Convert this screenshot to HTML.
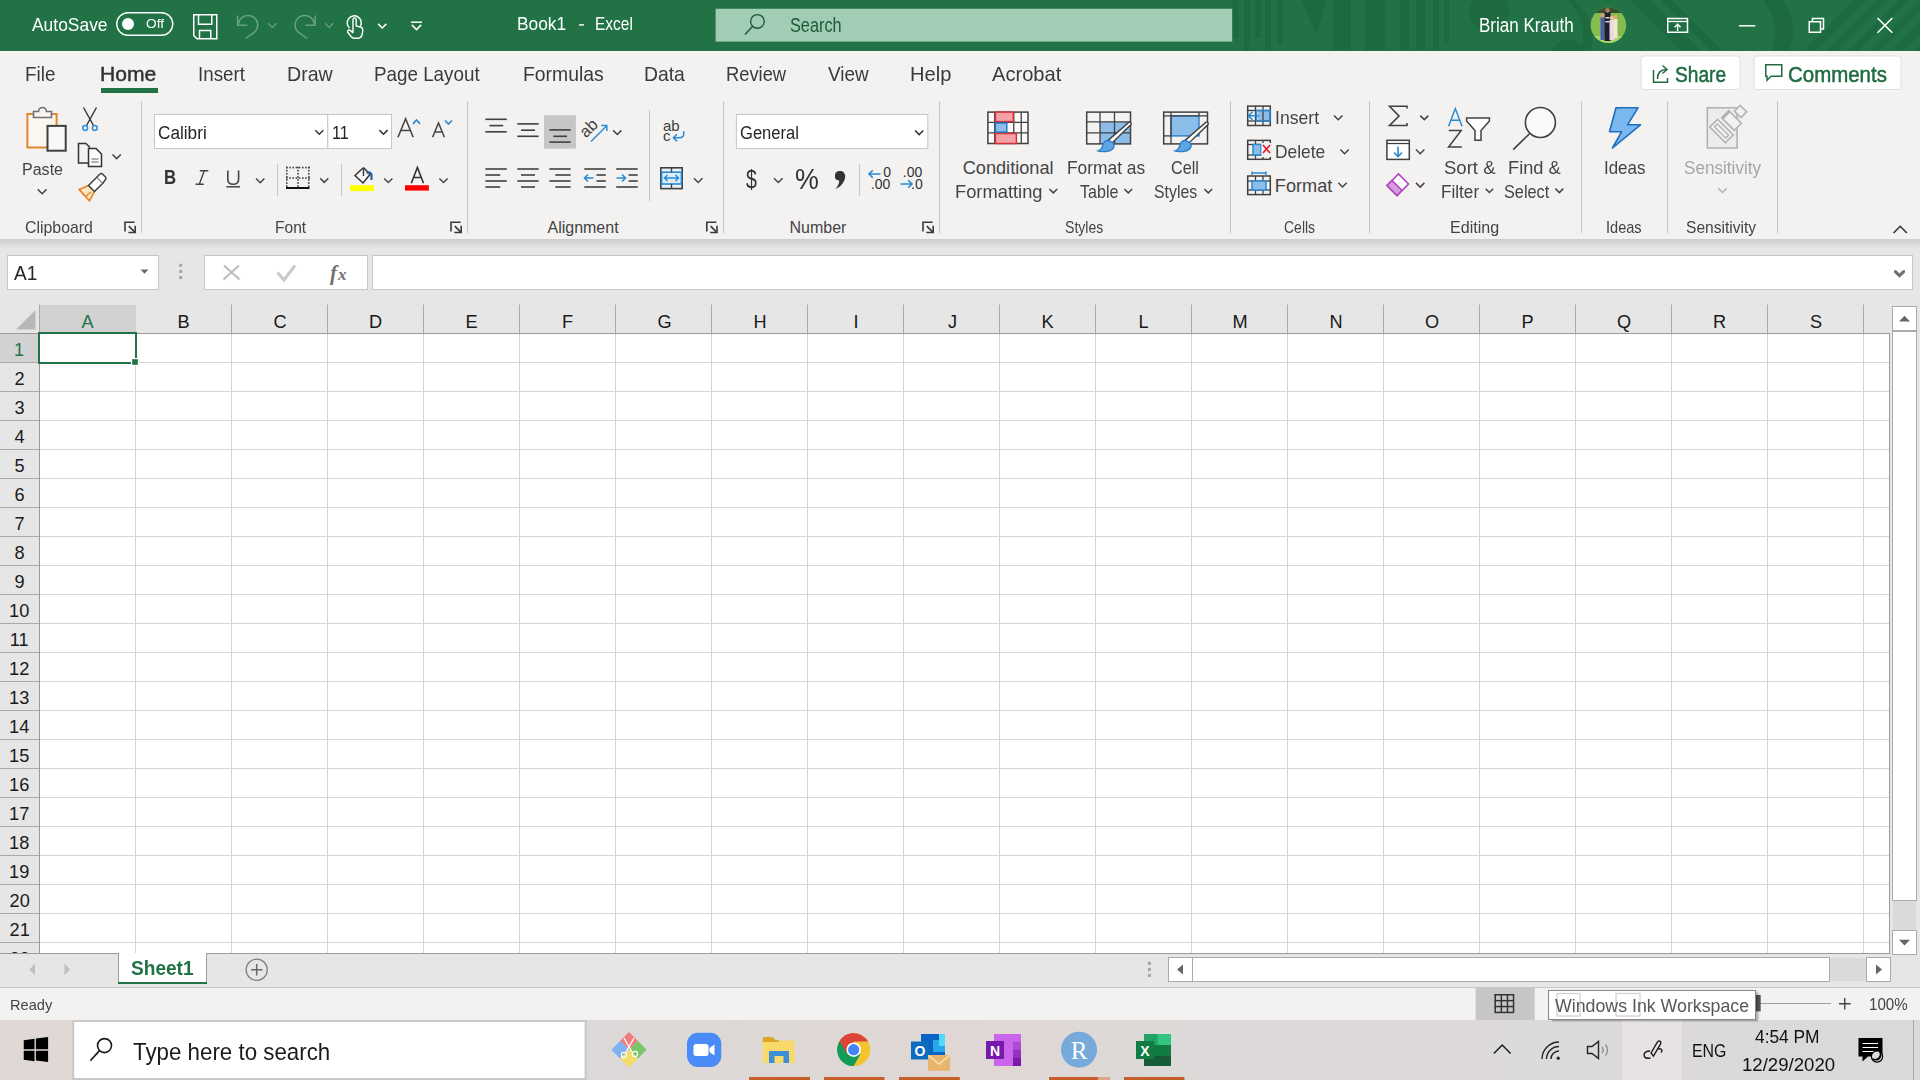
<!DOCTYPE html>
<html><head><meta charset="utf-8"><style>
html,body{margin:0;padding:0;}
body{width:1920px;height:1080px;overflow:hidden;position:relative;background:#fff;font-family:"Liberation Sans",sans-serif;}
.r{position:absolute;}
.t{position:absolute;white-space:pre;line-height:normal;transform-origin:0 0;}
svg{position:absolute;left:0;top:0;}
</style></head><body>
<div class="r" style="left:0px;top:0px;width:1920px;height:51px;background:#217346;"></div>
<div class="r" style="left:0px;top:51px;width:1920px;height:188px;background:#f3f2f1;"></div>
<div class="r" style="left:0px;top:239px;width:1920px;height:714px;background:#e6e6e6;"></div>
<div class="r" style="left:0px;top:239px;width:1920px;height:10px;background:linear-gradient(#cdcdcc,#d8d8d8 35%,#e6e6e6);"></div>
<div class="r" style="left:40px;top:334px;width:1850px;height:619px;background:#ffffff;"></div>
<svg width="1920" height="1080" viewBox="0 0 1920 1080">
<line x1="135.5" y1="334" x2="135.5" y2="953" stroke="#d5d5d5" stroke-width="1"/>
<line x1="231.5" y1="334" x2="231.5" y2="953" stroke="#d5d5d5" stroke-width="1"/>
<line x1="327.5" y1="334" x2="327.5" y2="953" stroke="#d5d5d5" stroke-width="1"/>
<line x1="423.5" y1="334" x2="423.5" y2="953" stroke="#d5d5d5" stroke-width="1"/>
<line x1="519.5" y1="334" x2="519.5" y2="953" stroke="#d5d5d5" stroke-width="1"/>
<line x1="615.5" y1="334" x2="615.5" y2="953" stroke="#d5d5d5" stroke-width="1"/>
<line x1="711.5" y1="334" x2="711.5" y2="953" stroke="#d5d5d5" stroke-width="1"/>
<line x1="807.5" y1="334" x2="807.5" y2="953" stroke="#d5d5d5" stroke-width="1"/>
<line x1="903.5" y1="334" x2="903.5" y2="953" stroke="#d5d5d5" stroke-width="1"/>
<line x1="999.5" y1="334" x2="999.5" y2="953" stroke="#d5d5d5" stroke-width="1"/>
<line x1="1095.5" y1="334" x2="1095.5" y2="953" stroke="#d5d5d5" stroke-width="1"/>
<line x1="1191.5" y1="334" x2="1191.5" y2="953" stroke="#d5d5d5" stroke-width="1"/>
<line x1="1287.5" y1="334" x2="1287.5" y2="953" stroke="#d5d5d5" stroke-width="1"/>
<line x1="1383.5" y1="334" x2="1383.5" y2="953" stroke="#d5d5d5" stroke-width="1"/>
<line x1="1479.5" y1="334" x2="1479.5" y2="953" stroke="#d5d5d5" stroke-width="1"/>
<line x1="1575.5" y1="334" x2="1575.5" y2="953" stroke="#d5d5d5" stroke-width="1"/>
<line x1="1671.5" y1="334" x2="1671.5" y2="953" stroke="#d5d5d5" stroke-width="1"/>
<line x1="1767.5" y1="334" x2="1767.5" y2="953" stroke="#d5d5d5" stroke-width="1"/>
<line x1="1863.5" y1="334" x2="1863.5" y2="953" stroke="#d5d5d5" stroke-width="1"/>
<line x1="40" y1="362.5" x2="1889" y2="362.5" stroke="#d5d5d5" stroke-width="1"/>
<line x1="40" y1="391.5" x2="1889" y2="391.5" stroke="#d5d5d5" stroke-width="1"/>
<line x1="40" y1="420.5" x2="1889" y2="420.5" stroke="#d5d5d5" stroke-width="1"/>
<line x1="40" y1="449.5" x2="1889" y2="449.5" stroke="#d5d5d5" stroke-width="1"/>
<line x1="40" y1="478.5" x2="1889" y2="478.5" stroke="#d5d5d5" stroke-width="1"/>
<line x1="40" y1="507.5" x2="1889" y2="507.5" stroke="#d5d5d5" stroke-width="1"/>
<line x1="40" y1="536.5" x2="1889" y2="536.5" stroke="#d5d5d5" stroke-width="1"/>
<line x1="40" y1="565.5" x2="1889" y2="565.5" stroke="#d5d5d5" stroke-width="1"/>
<line x1="40" y1="594.5" x2="1889" y2="594.5" stroke="#d5d5d5" stroke-width="1"/>
<line x1="40" y1="623.5" x2="1889" y2="623.5" stroke="#d5d5d5" stroke-width="1"/>
<line x1="40" y1="652.5" x2="1889" y2="652.5" stroke="#d5d5d5" stroke-width="1"/>
<line x1="40" y1="681.5" x2="1889" y2="681.5" stroke="#d5d5d5" stroke-width="1"/>
<line x1="40" y1="710.5" x2="1889" y2="710.5" stroke="#d5d5d5" stroke-width="1"/>
<line x1="40" y1="739.5" x2="1889" y2="739.5" stroke="#d5d5d5" stroke-width="1"/>
<line x1="40" y1="768.5" x2="1889" y2="768.5" stroke="#d5d5d5" stroke-width="1"/>
<line x1="40" y1="797.5" x2="1889" y2="797.5" stroke="#d5d5d5" stroke-width="1"/>
<line x1="40" y1="826.5" x2="1889" y2="826.5" stroke="#d5d5d5" stroke-width="1"/>
<line x1="40" y1="855.5" x2="1889" y2="855.5" stroke="#d5d5d5" stroke-width="1"/>
<line x1="40" y1="884.5" x2="1889" y2="884.5" stroke="#d5d5d5" stroke-width="1"/>
<line x1="40" y1="913.5" x2="1889" y2="913.5" stroke="#d5d5d5" stroke-width="1"/>
<line x1="40" y1="942.5" x2="1889" y2="942.5" stroke="#d5d5d5" stroke-width="1"/>
<defs><clipPath id="tbc"><rect x="0" y="0" width="1920" height="51"/></clipPath></defs><g clip-path="url(#tbc)">
<rect x="1232.00" y="0.00" width="6.70" height="38.00" fill="#1d6a40" stroke="none" stroke-width="1" />
<rect x="1244.00" y="0.00" width="5.60" height="50.00" fill="#1d6a40" stroke="none" stroke-width="1" />
<rect x="1255.00" y="0.00" width="5.50" height="38.00" fill="#1d6a40" stroke="none" stroke-width="1" />
<rect x="1265.00" y="0.00" width="5.60" height="50.00" fill="#1d6a40" stroke="none" stroke-width="1" />
<rect x="1277.00" y="0.00" width="5.40" height="45.00" fill="#1d6a40" stroke="none" stroke-width="1" />
<rect x="1333.50" y="0.00" width="17.30" height="50.00" fill="#1d6a40" stroke="none" stroke-width="1" />
<rect x="1365.40" y="0.00" width="20.00" height="50.00" fill="#1d6a40" stroke="none" stroke-width="1" />
<rect x="1400.00" y="0.00" width="9.00" height="50.00" fill="#1d6a40" stroke="none" stroke-width="1" />
<rect x="1416.00" y="0.00" width="9.00" height="50.00" fill="#1d6a40" stroke="none" stroke-width="1" />
<rect x="1433.00" y="0.00" width="6.00" height="50.00" fill="#1d6a40" stroke="none" stroke-width="1" />
<rect x="1444.00" y="0.00" width="5.00" height="42.00" fill="#1d6a40" stroke="none" stroke-width="1" />
<path d="M1302,0 L1327,0 L1316,35 Z" fill="#1d6a40" stroke="none" stroke-width="1" />
<circle cx="1489" cy="11" r="20" fill="#1d6a40"/>
<circle cx="1568" cy="58" r="18" fill="#1d6a40"/>
<path d="M1575,0 Q1600,25 1590,50 L1580,50 Q1590,25 1568,0 Z" fill="#1d6a40" stroke="none" stroke-width="1" />
<path d="M1630,0 L1650,0 L1700,50 L1680,50 Z" fill="#1d6a40" stroke="none" stroke-width="1" />
<path d="M1660,0 L1672,0 L1722,50 L1710,50 Z" fill="#1d6a40" stroke="none" stroke-width="1" />
<path d="M1763,0 L1783,0 Q1800,25 1789,50 L1772,50 Q1782,25 1763,0 Z" fill="#1d6a40" stroke="none" stroke-width="1" />
<path d="M1805,50 L1815,50 L1865,0 L1855,0 Z" fill="#1d6a40" stroke="none" stroke-width="1" />
<path d="M1827,50 L1837,50 L1887,0 L1877,0 Z" fill="#1d6a40" stroke="none" stroke-width="1" />
<path d="M1849,50 L1859,50 L1909,0 L1899,0 Z" fill="#1d6a40" stroke="none" stroke-width="1" />
<path d="M1871,50 L1881,50 L1931,0 L1921,0 Z" fill="#1d6a40" stroke="none" stroke-width="1" />
<path d="M1893,50 L1903,50 L1953,0 L1943,0 Z" fill="#1d6a40" stroke="none" stroke-width="1" />
<path d="M1915,50 L1925,50 L1975,0 L1965,0 Z" fill="#1d6a40" stroke="none" stroke-width="1" />
</g>
<line x1="579" y1="24.9" x2="584" y2="24.9" stroke="#fff" stroke-width="1.4"/>
<rect x="116.75" y="12.75" width="56" height="22.5" rx="11.25" fill="none" stroke="#fff" stroke-width="1.4"/>
<circle cx="128" cy="24" r="6" fill="#fff"/>
<path d="M193.75,14.75 H216.75 V38.75 H197 L193.75,35.5 Z" fill="none" stroke="#ffffff" stroke-width="1.5" />
<path d="M198.5,14.75 V24.25 H211.75 V14.75" fill="none" stroke="#ffffff" stroke-width="1.5" />
<path d="M199.5,38.75 V30.5 H210.75 V38.75" fill="none" stroke="#ffffff" stroke-width="1.5" />
<path d="M238.6,23.5 A9.6,9.6 0 1 1 254.5,32.2 L245.5,38.5" fill="none" stroke="rgba(255,255,255,0.33)" stroke-width="1.5" />
<path d="M237.6,15.5 V25.2 H247.4" fill="none" stroke="rgba(255,255,255,0.33)" stroke-width="1.5" />
<path d="M268.20,23.25 L272.30,27.35 L276.40,23.25" fill="none" stroke="rgba(255,255,255,0.33)" stroke-width="1.3"/>
<path d="M314.2,23.5 A9.6,9.6 0 1 0 298.3,32.2 L307.3,38.5" fill="none" stroke="rgba(255,255,255,0.33)" stroke-width="1.5" />
<path d="M315.2,15.5 V25.2 H305.4" fill="none" stroke="rgba(255,255,255,0.33)" stroke-width="1.5" />
<path d="M325.00,23.22 L329.15,27.38 L333.30,23.22" fill="none" stroke="rgba(255,255,255,0.33)" stroke-width="1.3"/>
<path d="M349.5,28 A7,7 0 1 1 360.5,26" fill="none" stroke="#ffffff" stroke-width="1.5" />
<path d="M353,33 V19.5 A1.6,1.6 0 0 1 356.2,19.5 V26 L360.5,27 Q363,27.8 362.8,30.5 L362,35 Q361,38.3 357.5,38.3 H354.5 Q352.5,38.3 351,36.5 L348,32.5 Q347,31 348.5,30.2 Q349.8,29.7 351,31 L353,33" fill="none" stroke="#ffffff" stroke-width="1.4" />
<path d="M378.10,23.85 L382.20,27.95 L386.30,23.85" fill="none" stroke="#ffffff" stroke-width="1.5"/>
<line x1="411" y1="22.2" x2="422" y2="22.2" stroke="#ffffff" stroke-width="1.5"/>
<path d="M411.80,24.90 L416.50,29.60 L421.20,24.90" fill="none" stroke="#ffffff" stroke-width="1.5"/>
<rect x="715.60" y="8.75" width="516.60" height="32.85" fill="#a0cdb3" stroke="none" stroke-width="1" />
<circle cx="757.4" cy="21.4" r="6.8" fill="none" stroke="#1e5b3a" stroke-width="1.4"/>
<path d="M752.5,26.4 L745,34.6" fill="none" stroke="#1e5b3a" stroke-width="1.5" />
<defs><radialGradient id="av" cx="50%" cy="60%" r="55%"><stop offset="0" stop-color="#8fbf5a"/><stop offset="1" stop-color="#5f8f3a"/></radialGradient><clipPath id="avc"><circle cx="1608.4" cy="25.2" r="17.8"/></clipPath></defs>
<circle cx="1608.4" cy="25.2" r="17.8" fill="#86bb4e"/>
<g clip-path="url(#avc)"><rect x="1588.00" y="5.00" width="42.00" height="8.00" fill="#34502c" stroke="none" stroke-width="1" /><rect x="1588.00" y="36.00" width="42.00" height="8.00" fill="#a9d46a" stroke="none" stroke-width="1" /><rect x="1600.50" y="17.00" width="4.00" height="23.00" fill="#4b5fb0" stroke="none" stroke-width="1" /><rect x="1604.50" y="12.00" width="6.00" height="29.00" fill="#1d1d2b" stroke="none" stroke-width="1" /><rect x="1605.50" y="17.00" width="4.00" height="1.50" fill="#ddd" stroke="none" stroke-width="1" /><rect x="1605.50" y="21.00" width="4.00" height="1.50" fill="#ddd" stroke="none" stroke-width="1" /><rect x="1609.50" y="20.00" width="5.00" height="20.00" fill="#ecd6e6" stroke="none" stroke-width="1" /><rect x="1613.50" y="19.00" width="4.00" height="19.00" fill="#f2e8d0" stroke="none" stroke-width="1" /><circle cx="1602.5" cy="15.5" r="2.2" fill="#c9a27a"/><circle cx="1607.5" cy="10.5" r="2.4" fill="#a57a5a"/><circle cx="1612" cy="18" r="2.1" fill="#e8c8a0"/><circle cx="1615.5" cy="17" r="2" fill="#d8b070"/></g>
<rect x="1667.75" y="18.50" width="19.75" height="13.75" fill="none" stroke="#ffffff" stroke-width="1.5" />
<line x1="1668" y1="21.5" x2="1687.5" y2="21.5" stroke="#ffffff" stroke-width="1.3"/>
<path d="M1677.6,31 V24.5 M1674.6,27.3 L1677.6,24.3 L1680.6,27.3" fill="none" stroke="#ffffff" stroke-width="1.4" />
<line x1="1739" y1="25.8" x2="1755.3" y2="25.8" stroke="#ffffff" stroke-width="1.5"/>
<rect x="1809.25" y="21.75" width="11.25" height="10.50" fill="none" stroke="#ffffff" stroke-width="1.5" />
<path d="M1812.5,21.5 V18.5 H1823.5 V29 H1820.5" fill="none" stroke="#ffffff" stroke-width="1.5" />
<path d="M1877.5,18 L1892.3,32.8 M1892.3,18 L1877.5,32.8" fill="none" stroke="#ffffff" stroke-width="1.6" />
<rect x="101.00" y="88.00" width="57.00" height="5.00" fill="#217346" stroke="none" stroke-width="1" />
<rect x="1641" y="56" width="99" height="33.5" rx="3" fill="#fff" stroke="#e1dfdd" stroke-width="1"/>
<rect x="1754" y="56" width="147" height="33.5" rx="3" fill="#fff" stroke="#e1dfdd" stroke-width="1"/>
<path d="M1653.5,70 V82.25 H1667.5 V78" fill="none" stroke="#1e6b41" stroke-width="1.5" />
<path d="M1657.5,79 Q1657.5,69.5 1666.5,69.5" fill="none" stroke="#1e6b41" stroke-width="1.5" />
<path d="M1662.5,65.5 L1667,69.5 L1662.5,73.5" fill="none" stroke="#1e6b41" stroke-width="1.5" />
<path d="M1765.75,64.75 H1781.75 V76.25 H1771 L1767,80.25 V76.25 H1765.75 Z" fill="none" stroke="#1e6b41" stroke-width="1.5" />
<line x1="141.5" y1="101" x2="141.5" y2="233" stroke="#c8c6c4" stroke-width="1"/>
<line x1="467.5" y1="101" x2="467.5" y2="233" stroke="#c8c6c4" stroke-width="1"/>
<line x1="723.5" y1="101" x2="723.5" y2="233" stroke="#c8c6c4" stroke-width="1"/>
<line x1="939.5" y1="101" x2="939.5" y2="233" stroke="#c8c6c4" stroke-width="1"/>
<line x1="1230.5" y1="101" x2="1230.5" y2="233" stroke="#c8c6c4" stroke-width="1"/>
<line x1="1369.5" y1="101" x2="1369.5" y2="233" stroke="#c8c6c4" stroke-width="1"/>
<line x1="1581.5" y1="101" x2="1581.5" y2="233" stroke="#c8c6c4" stroke-width="1"/>
<line x1="1667.5" y1="101" x2="1667.5" y2="233" stroke="#c8c6c4" stroke-width="1"/>
<line x1="1777.5" y1="101" x2="1777.5" y2="233" stroke="#c8c6c4" stroke-width="1"/>
<line x1="277.5" y1="164" x2="277.5" y2="196" stroke="#c8c6c4" stroke-width="1"/>
<line x1="341.5" y1="164" x2="341.5" y2="196" stroke="#c8c6c4" stroke-width="1"/>
<line x1="649.5" y1="110" x2="649.5" y2="201" stroke="#c8c6c4" stroke-width="1"/>
<line x1="859.5" y1="164" x2="859.5" y2="196" stroke="#c8c6c4" stroke-width="1"/>
<rect x="27.40" y="114.00" width="29.20" height="33.50" fill="#fbf6ee" stroke="#e3872a" stroke-width="2" />
<path d="M33.5,117.5 V111.5 H38.5 Q39,107.5 42.5,107.5 Q46,107.5 46.5,111.5 H51.5 V117.5 Z" fill="#f5f5f5" stroke="#707070" stroke-width="1.6" />
<rect x="47.50" y="125.90" width="18.20" height="24.80" fill="#f8f8f8" stroke="#404040" stroke-width="2" />
<path d="M37.80,189.38 L42.15,193.73 L46.50,189.38" fill="none" stroke="#444" stroke-width="1.5"/>
<path d="M83.5,107.5 L93.5,125.5 M96.5,107.5 L86.5,125.5" fill="none" stroke="#333" stroke-width="1.4" />
<circle cx="85.2" cy="128" r="2.4" fill="#fff" stroke="#2a8ad4" stroke-width="1.5"/>
<circle cx="94.8" cy="128" r="2.4" fill="#fff" stroke="#2a8ad4" stroke-width="1.5"/>
<path d="M88,163 H78.5 V143.5 H86 L90,147.5" fill="none" stroke="#333" stroke-width="1.5" />
<path d="M88.5,148.5 H96 L101.5,154 V166.5 H88.5 Z" fill="#fafafa" stroke="#333" stroke-width="1.5" />
<path d="M91.5,159 H98.5 M91.5,162 H98.5" fill="none" stroke="#666" stroke-width="1.2" />
<path d="M112.50,154.43 L116.65,158.57 L120.80,154.43" fill="none" stroke="#444" stroke-width="1.5"/>
<path d="M79.2,189.5 L88.5,185.5 L94.5,191.5 L89.5,200.8 Z" fill="#fce4c4" stroke="#e3872a" stroke-width="1.6" />
<path d="M84.5,195.5 L79.5,189.8 M86,197 Q88,193 91.5,192" fill="none" stroke="#e3872a" stroke-width="1.3" />
<path d="M88.5,185.5 L97,177 L103,183 L94.5,191.5 Z" fill="#fff" stroke="#404040" stroke-width="1.5" />
<path d="M97,177 L100,174 Q101.5,172.8 102.8,174.2 L105.5,177 Q106.7,178.3 105.5,179.6 L103,183" fill="#fff" stroke="#404040" stroke-width="1.5" />
<path d="M125.0,231.6 V222.3 H134.6" fill="none" stroke="#3a3a3a" stroke-width="1.6" /><path d="M128.8,226.1 L134.6,231.9" fill="none" stroke="#3a3a3a" stroke-width="1.6" /><path d="M135.2,225.7 V232.5 H128.4" fill="none" stroke="#3a3a3a" stroke-width="1.6" />
<rect x="154.50" y="114.50" width="173.30" height="34.00" fill="#fff" stroke="#c6c6c6" stroke-width="1" />
<rect x="327.80" y="114.50" width="63.70" height="34.00" fill="#fff" stroke="#c6c6c6" stroke-width="1" />
<path d="M315.30,130.20 L319.30,134.20 L323.30,130.20" fill="none" stroke="#333" stroke-width="1.5"/>
<path d="M379.40,130.15 L383.50,134.25 L387.60,130.15" fill="none" stroke="#333" stroke-width="1.5"/>
<path d="M398,137.2 L405.6,118.8 L413.2,137.2 M400.8,130.5 H410.4" fill="none" stroke="#444" stroke-width="1.6" />
<path d="M413,123.9 L416.5,120 L420,123.9" fill="none" stroke="#2a8ad4" stroke-width="1.6" />
<path d="M432.6,137.2 L438.5,123 L444.4,137.2 M434.8,132 H442.2" fill="none" stroke="#444" stroke-width="1.5" />
<path d="M445,120.5 L448.5,124 L452,120.5" fill="none" stroke="#2a8ad4" stroke-width="1.6" />
<path d="M199.3,184.2 L204.3,170.7 M199.8,170.7 H208.3 M195.5,184.2 H203.8" fill="none" stroke="#444" stroke-width="1.4" />
<path d="M227.8,170.5 V179 Q227.8,184.3 233.2,184.3 Q238.6,184.3 238.6,179 V170.5" fill="none" stroke="#444" stroke-width="1.6" />
<line x1="226.4" y1="186.8" x2="240" y2="186.8" stroke="#444" stroke-width="1.5"/>
<path d="M256.00,178.55 L260.20,182.75 L264.40,178.55" fill="none" stroke="#444" stroke-width="1.5"/>
<rect x="286.00" y="166.75" width="1.60" height="1.60" fill="#404040" stroke="none" stroke-width="1" />
<rect x="286.00" y="177.25" width="1.60" height="1.60" fill="#404040" stroke="none" stroke-width="1" />
<rect x="289.20" y="166.75" width="1.60" height="1.60" fill="#404040" stroke="none" stroke-width="1" />
<rect x="289.20" y="177.25" width="1.60" height="1.60" fill="#404040" stroke="none" stroke-width="1" />
<rect x="292.40" y="166.75" width="1.60" height="1.60" fill="#404040" stroke="none" stroke-width="1" />
<rect x="292.40" y="177.25" width="1.60" height="1.60" fill="#404040" stroke="none" stroke-width="1" />
<rect x="295.60" y="166.75" width="1.60" height="1.60" fill="#404040" stroke="none" stroke-width="1" />
<rect x="295.60" y="177.25" width="1.60" height="1.60" fill="#404040" stroke="none" stroke-width="1" />
<rect x="298.80" y="166.75" width="1.60" height="1.60" fill="#404040" stroke="none" stroke-width="1" />
<rect x="298.80" y="177.25" width="1.60" height="1.60" fill="#404040" stroke="none" stroke-width="1" />
<rect x="302.00" y="166.75" width="1.60" height="1.60" fill="#404040" stroke="none" stroke-width="1" />
<rect x="302.00" y="177.25" width="1.60" height="1.60" fill="#404040" stroke="none" stroke-width="1" />
<rect x="305.20" y="166.75" width="1.60" height="1.60" fill="#404040" stroke="none" stroke-width="1" />
<rect x="305.20" y="177.25" width="1.60" height="1.60" fill="#404040" stroke="none" stroke-width="1" />
<rect x="308.40" y="166.75" width="1.60" height="1.60" fill="#404040" stroke="none" stroke-width="1" />
<rect x="308.40" y="177.25" width="1.60" height="1.60" fill="#404040" stroke="none" stroke-width="1" />
<rect x="286.00" y="166.75" width="1.60" height="1.60" fill="#404040" stroke="none" stroke-width="1" />
<rect x="297.20" y="166.75" width="1.60" height="1.60" fill="#404040" stroke="none" stroke-width="1" />
<rect x="308.00" y="166.75" width="1.60" height="1.60" fill="#404040" stroke="none" stroke-width="1" />
<rect x="286.00" y="169.85" width="1.60" height="1.60" fill="#404040" stroke="none" stroke-width="1" />
<rect x="297.20" y="169.85" width="1.60" height="1.60" fill="#404040" stroke="none" stroke-width="1" />
<rect x="308.00" y="169.85" width="1.60" height="1.60" fill="#404040" stroke="none" stroke-width="1" />
<rect x="286.00" y="172.95" width="1.60" height="1.60" fill="#404040" stroke="none" stroke-width="1" />
<rect x="297.20" y="172.95" width="1.60" height="1.60" fill="#404040" stroke="none" stroke-width="1" />
<rect x="308.00" y="172.95" width="1.60" height="1.60" fill="#404040" stroke="none" stroke-width="1" />
<rect x="286.00" y="176.05" width="1.60" height="1.60" fill="#404040" stroke="none" stroke-width="1" />
<rect x="297.20" y="176.05" width="1.60" height="1.60" fill="#404040" stroke="none" stroke-width="1" />
<rect x="308.00" y="176.05" width="1.60" height="1.60" fill="#404040" stroke="none" stroke-width="1" />
<rect x="286.00" y="179.15" width="1.60" height="1.60" fill="#404040" stroke="none" stroke-width="1" />
<rect x="297.20" y="179.15" width="1.60" height="1.60" fill="#404040" stroke="none" stroke-width="1" />
<rect x="308.00" y="179.15" width="1.60" height="1.60" fill="#404040" stroke="none" stroke-width="1" />
<rect x="286.00" y="182.25" width="1.60" height="1.60" fill="#404040" stroke="none" stroke-width="1" />
<rect x="297.20" y="182.25" width="1.60" height="1.60" fill="#404040" stroke="none" stroke-width="1" />
<rect x="308.00" y="182.25" width="1.60" height="1.60" fill="#404040" stroke="none" stroke-width="1" />
<rect x="286.00" y="185.35" width="1.60" height="1.60" fill="#404040" stroke="none" stroke-width="1" />
<rect x="297.20" y="185.35" width="1.60" height="1.60" fill="#404040" stroke="none" stroke-width="1" />
<rect x="308.00" y="185.35" width="1.60" height="1.60" fill="#404040" stroke="none" stroke-width="1" />
<line x1="286" y1="188" x2="309.5" y2="188" stroke="#111" stroke-width="2"/>
<path d="M320.20,178.28 L324.25,182.33 L328.30,178.28" fill="none" stroke="#444" stroke-width="1.5"/>
<path d="M355,175.5 L362.5,168.5 Q363.5,167.5 364.5,168.5 L370,174.5 L363,183 Z" fill="#f8f8f8" stroke="#333" stroke-width="1.5" />
<path d="M363.5,169 V176" fill="none" stroke="#333" stroke-width="1.4" />
<path d="M367,173.5 Q370,171 371.5,174.5 L371.5,180" fill="none" stroke="#2064a8" stroke-width="2.2" />
<rect x="350.00" y="185.20" width="23.90" height="5.90" fill="#ffff00" stroke="none" stroke-width="1" />
<path d="M384.20,178.45 L388.30,182.55 L392.40,178.45" fill="none" stroke="#444" stroke-width="1.5"/>
<path d="M411.3,183.3 L417.4,167.4 L423.5,183.3 M413.6,177.5 H421.2" fill="none" stroke="#333" stroke-width="1.6" />
<rect x="405.00" y="185.20" width="23.90" height="5.40" fill="#ff0000" stroke="none" stroke-width="1" />
<path d="M439.40,178.45 L443.50,182.55 L447.60,178.45" fill="none" stroke="#444" stroke-width="1.5"/>
<path d="M451.0,231.6 V222.3 H460.6" fill="none" stroke="#3a3a3a" stroke-width="1.6" /><path d="M454.8,226.1 L460.6,231.9" fill="none" stroke="#3a3a3a" stroke-width="1.6" /><path d="M461.2,225.7 V232.5 H454.4" fill="none" stroke="#3a3a3a" stroke-width="1.6" />
<line x1="485.4" y1="119.3" x2="506.8" y2="119.3" stroke="#404040" stroke-width="1.6"/><line x1="489.5" y1="125.6" x2="503.2" y2="125.6" stroke="#404040" stroke-width="1.6"/><line x1="485.4" y1="131.8" x2="506.8" y2="131.8" stroke="#404040" stroke-width="1.6"/>
<line x1="517.3" y1="123.9" x2="538.6" y2="123.9" stroke="#404040" stroke-width="1.6"/><line x1="521" y1="130.2" x2="535" y2="130.2" stroke="#404040" stroke-width="1.6"/><line x1="517.3" y1="136.3" x2="538.6" y2="136.3" stroke="#404040" stroke-width="1.6"/>
<rect x="544.00" y="115.20" width="31.90" height="33.40" fill="#c8c6c4" stroke="none" stroke-width="1" />
<line x1="549.4" y1="129.9" x2="570.6" y2="129.9" stroke="#404040" stroke-width="1.6"/><line x1="553.3" y1="136.3" x2="567" y2="136.3" stroke="#404040" stroke-width="1.6"/><line x1="549.4" y1="142.1" x2="570.6" y2="142.1" stroke="#404040" stroke-width="1.6"/>
<text x="0" y="0" font-family="Liberation Sans" font-size="16.5" fill="#404040" transform="translate(586,138.5) rotate(-45)">ab</text>
<path d="M591,141.5 L606.5,126" fill="none" stroke="#2a8ad4" stroke-width="1.5" />
<path d="M601.2,125.4 H606.8 V131" fill="none" stroke="#2a8ad4" stroke-width="1.5" />
<path d="M613.20,130.40 L617.30,134.50 L621.40,130.40" fill="none" stroke="#444" stroke-width="1.5"/>
<text x="663" y="130.5" font-family="Liberation Sans" font-size="15" fill="#404040">ab</text>
<text x="663" y="140.8" font-family="Liberation Sans" font-size="15" fill="#404040">c</text>
<path d="M683.6,131.2 Q685.2,137.8 678.5,137.8 H673.5 M677,134.3 L673.5,137.8 L677,141.3" fill="none" stroke="#2a8ad4" stroke-width="1.6" />
<line x1="485.4" y1="169" x2="506.8" y2="169" stroke="#404040" stroke-width="1.6"/><line x1="485.4" y1="175" x2="500.2" y2="175" stroke="#404040" stroke-width="1.6"/><line x1="485.4" y1="181" x2="506.8" y2="181" stroke="#404040" stroke-width="1.6"/><line x1="485.4" y1="187" x2="500.2" y2="187" stroke="#404040" stroke-width="1.6"/>
<line x1="517.3" y1="169" x2="538.6" y2="169" stroke="#404040" stroke-width="1.6"/><line x1="521" y1="175" x2="535" y2="175" stroke="#404040" stroke-width="1.6"/><line x1="517.3" y1="181" x2="538.6" y2="181" stroke="#404040" stroke-width="1.6"/><line x1="521" y1="187" x2="535" y2="187" stroke="#404040" stroke-width="1.6"/>
<line x1="549.4" y1="169" x2="570.6" y2="169" stroke="#404040" stroke-width="1.6"/><line x1="555.3" y1="175" x2="570.6" y2="175" stroke="#404040" stroke-width="1.6"/><line x1="549.4" y1="181" x2="570.6" y2="181" stroke="#404040" stroke-width="1.6"/><line x1="555.3" y1="187" x2="570.6" y2="187" stroke="#404040" stroke-width="1.6"/>
<line x1="584.3" y1="169" x2="605.8" y2="169" stroke="#404040" stroke-width="1.6"/><line x1="596.5" y1="175" x2="605.8" y2="175" stroke="#404040" stroke-width="1.6"/><line x1="596.5" y1="181" x2="605.8" y2="181" stroke="#404040" stroke-width="1.6"/><line x1="584.3" y1="187" x2="605.8" y2="187" stroke="#404040" stroke-width="1.6"/>
<path d="M584.8,178 H593.5 M588,174.5 L584.5,178 L588,181.5" fill="none" stroke="#2a8ad4" stroke-width="1.6" />
<line x1="616.2" y1="169" x2="637.7" y2="169" stroke="#404040" stroke-width="1.6"/><line x1="628.5" y1="175" x2="637.7" y2="175" stroke="#404040" stroke-width="1.6"/><line x1="628.5" y1="181" x2="637.7" y2="181" stroke="#404040" stroke-width="1.6"/><line x1="616.2" y1="187" x2="637.7" y2="187" stroke="#404040" stroke-width="1.6"/>
<path d="M616.5,178 H625.5 M622,174.5 L625.5,178 L622,181.5" fill="none" stroke="#2a8ad4" stroke-width="1.6" />
<rect x="660.80" y="167.80" width="21.40" height="20.80" fill="#e8f3fb" stroke="#404040" stroke-width="1.6" />
<rect x="661.60" y="172.20" width="19.80" height="11.80" fill="#dcecf9" stroke="#2a8ad4" stroke-width="1.6" />
<line x1="671.5" y1="168" x2="671.5" y2="172" stroke="#404040" stroke-width="1.4"/>
<line x1="671.5" y1="184" x2="671.5" y2="188.6" stroke="#404040" stroke-width="1.4"/>
<path d="M664.5,178 H678.5 M667.5,175 L664.5,178 L667.5,181 M675.5,175 L678.5,178 L675.5,181" fill="none" stroke="#2a8ad4" stroke-width="1.5" />
<path d="M694.00,178.30 L698.20,182.50 L702.40,178.30" fill="none" stroke="#444" stroke-width="1.5"/>
<path d="M706.8,231.6 V222.3 H716.4" fill="none" stroke="#3a3a3a" stroke-width="1.6" /><path d="M710.6,226.1 L716.4,231.9" fill="none" stroke="#3a3a3a" stroke-width="1.6" /><path d="M717.0,225.7 V232.5 H710.2" fill="none" stroke="#3a3a3a" stroke-width="1.6" />
<rect x="736.40" y="114.50" width="191.40" height="34.00" fill="#fff" stroke="#c6c6c6" stroke-width="1" />
<path d="M915.00,130.43 L919.15,134.57 L923.30,130.43" fill="none" stroke="#333" stroke-width="1.5"/>
<path d="M774.00,178.25 L778.30,182.55 L782.60,178.25" fill="none" stroke="#444" stroke-width="1.5"/>
<path d="M837,174 Q841.5,168 845,174.5 Q846.5,180 840,186.5 L835.5,189 Q840,183 839,180.5 Q834.5,180 835,176 Q835.5,172.5 837,174 Z" fill="#333" stroke="none" stroke-width="1" />
<circle cx="839.5" cy="175.5" r="4.5" fill="#333"/>
<path d="M869,174 H880.5 M872.8,170.2 L869,174 L872.8,177.8" fill="none" stroke="#2a8ad4" stroke-width="1.6" />
<path d="M900.5,184 H912 M908.2,180.2 L912,184 L908.2,187.8" fill="none" stroke="#2a8ad4" stroke-width="1.6" />
<text x="883.3" y="177.2" font-family="Liberation Sans" font-size="14" fill="#333">0</text>
<text x="870.8" y="189.4" font-family="Liberation Sans" font-size="14" fill="#333">.00</text>
<text x="902.8" y="177.2" font-family="Liberation Sans" font-size="14" fill="#333">.00</text>
<text x="911" y="189.4" font-family="Liberation Sans" font-size="14" fill="#333">.0</text>
<path d="M923.0,231.6 V222.3 H932.6" fill="none" stroke="#3a3a3a" stroke-width="1.6" /><path d="M926.8,226.1 L932.6,231.9" fill="none" stroke="#3a3a3a" stroke-width="1.6" /><path d="M933.2,225.7 V232.5 H926.4" fill="none" stroke="#3a3a3a" stroke-width="1.6" />
<rect x="987.90" y="112.10" width="40.10" height="31.40" fill="#fafafa" stroke="#404040" stroke-width="1.5" />
<line x1="994.7" y1="112" x2="994.7" y2="143.5" stroke="#404040" stroke-width="1.3"/>
<line x1="1013.75" y1="112" x2="1013.75" y2="143.5" stroke="#404040" stroke-width="1.3"/>
<line x1="1021.25" y1="112" x2="1021.25" y2="143.5" stroke="#404040" stroke-width="1.3"/>
<line x1="988" y1="122.3" x2="1028" y2="122.3" stroke="#404040" stroke-width="1.3"/>
<line x1="988" y1="132.8" x2="1028" y2="132.8" stroke="#404040" stroke-width="1.3"/>
<rect x="995.40" y="112.10" width="17.90" height="9.50" fill="#f4a0a6" stroke="#d13438" stroke-width="1.5" />
<rect x="995.40" y="133.50" width="21.00" height="10.00" fill="#f4a0a6" stroke="#d13438" stroke-width="1.5" />
<rect x="995.40" y="123.00" width="11.40" height="9.10" fill="#8dbde8" stroke="#1e76c0" stroke-width="1.4" />
<rect x="1100.00" y="121.90" width="30.50" height="22.00" fill="#8cbde9" stroke="none" stroke-width="1" /><rect x="1086.70" y="112.10" width="43.80" height="31.80" fill="none" stroke="#404040" stroke-width="1.5" /><line x1="1100" y1="112.10000000000001" x2="1100" y2="143.9" stroke="#404040" stroke-width="1.3"/><line x1="1114.5" y1="112.10000000000001" x2="1114.5" y2="143.9" stroke="#404040" stroke-width="1.3"/><line x1="1086.7" y1="121.9" x2="1130.5" y2="121.9" stroke="#404040" stroke-width="1.3"/><line x1="1086.7" y1="132.9" x2="1130.5" y2="132.9" stroke="#404040" stroke-width="1.3"/><path d="M1107.5,140.9 L1129.0,122.2 Q1131.8,121.9 1131.0,124.6 L1111.0,143.9 Z" fill="#fff" stroke="#404040" stroke-width="1.4" /><path d="M1107.5,140.4 Q1113.5,141.4 1114.2,145.4 Q1113.8,150.9 1106.0,151.6 Q1100.0,152.0 1097.8,151.0 Q1101.5,149.9 1102.5,146.4 Q1103.5,140.9 1107.5,140.4 Z" fill="#5ea3e4" stroke="#2a7cc7" stroke-width="1.3" />
<rect x="1171.00" y="115.90" width="28.00" height="20.00" fill="#8cbde9" stroke="#2a7cc7" stroke-width="1.4" /><rect x="1163.70" y="112.10" width="43.80" height="31.80" fill="none" stroke="#404040" stroke-width="1.5" /><line x1="1171" y1="112.10000000000001" x2="1171" y2="143.9" stroke="#404040" stroke-width="1.3"/><line x1="1199" y1="112.10000000000001" x2="1199" y2="115.9" stroke="#404040" stroke-width="1.3"/><line x1="1163.7" y1="115.9" x2="1207.5" y2="115.9" stroke="#404040" stroke-width="1.3"/><line x1="1163.7" y1="135.9" x2="1171" y2="135.9" stroke="#404040" stroke-width="1.3"/><path d="M1184.5,140.9 L1206.0,122.2 Q1208.8,121.9 1208.0,124.6 L1188.0,143.9 Z" fill="#fff" stroke="#404040" stroke-width="1.4" /><path d="M1184.5,140.4 Q1190.5,141.4 1191.2,145.4 Q1190.8,150.9 1183.0,151.6 Q1177.0,152.0 1174.8,151.0 Q1178.5,149.9 1179.5,146.4 Q1180.5,140.9 1184.5,140.4 Z" fill="#5ea3e4" stroke="#2a7cc7" stroke-width="1.3" />
<path d="M1049.40,188.95 L1053.30,192.85 L1057.20,188.95" fill="none" stroke="#444" stroke-width="1.5"/>
<path d="M1124.40,188.95 L1128.30,192.85 L1132.20,188.95" fill="none" stroke="#444" stroke-width="1.5"/>
<path d="M1204.40,188.95 L1208.30,192.85 L1212.20,188.95" fill="none" stroke="#444" stroke-width="1.5"/>
<rect x="1258.00" y="110.00" width="12.00" height="11.50" fill="#8cbde9" stroke="none" stroke-width="1" />
<rect x="1247.70" y="106.10" width="22.60" height="19.40" fill="none" stroke="#404040" stroke-width="1.5" />
<line x1="1255.5" y1="106" x2="1255.5" y2="125.5" stroke="#404040" stroke-width="1.3"/>
<line x1="1263" y1="106" x2="1263" y2="125.5" stroke="#404040" stroke-width="1.3"/>
<line x1="1248" y1="110.5" x2="1270.3" y2="110.5" stroke="#404040" stroke-width="1.3"/>
<line x1="1248" y1="121" x2="1270.3" y2="121" stroke="#404040" stroke-width="1.3"/>
<rect x="1256.50" y="110.50" width="13.50" height="10.50" fill="none" stroke="#2a8ad4" stroke-width="1.5" />
<path d="M1248.5,115.8 H1259 M1252.5,111.8 L1248.5,115.8 L1252.5,119.8" fill="none" stroke="#2a8ad4" stroke-width="1.6" style="paint-order:stroke"/>
<path d="M1334.00,115.47 L1338.25,119.72 L1342.50,115.47" fill="none" stroke="#444" stroke-width="1.5"/>
<rect x="1247.70" y="140.40" width="22.60" height="18.90" fill="none" stroke="#404040" stroke-width="1.5" />
<line x1="1255.5" y1="140.4" x2="1255.5" y2="159.3" stroke="#404040" stroke-width="1.3"/>
<line x1="1263" y1="140.4" x2="1263" y2="159.3" stroke="#404040" stroke-width="1.3"/>
<line x1="1248" y1="144.5" x2="1270.3" y2="144.5" stroke="#404040" stroke-width="1.3"/>
<line x1="1248" y1="155" x2="1270.3" y2="155" stroke="#404040" stroke-width="1.3"/>
<rect x="1253.00" y="144.50" width="8.00" height="10.50" fill="#8cbde9" stroke="#2a8ad4" stroke-width="1.5" />
<rect x="1261.50" y="143.00" width="9.50" height="14.00" fill="#f3f2f1" stroke="none" stroke-width="1" />
<path d="M1263,145 L1270,153 M1270,145 L1263,153" fill="none" stroke="#e81123" stroke-width="1.6" />
<path d="M1340.40,149.51 L1344.58,153.69 L1348.75,149.51" fill="none" stroke="#444" stroke-width="1.5"/>
<rect x="1247.70" y="176.00" width="22.60" height="18.60" fill="none" stroke="#404040" stroke-width="1.5" />
<line x1="1255.5" y1="176" x2="1255.5" y2="194.6" stroke="#404040" stroke-width="1.3"/>
<line x1="1263" y1="176" x2="1263" y2="194.6" stroke="#404040" stroke-width="1.3"/>
<line x1="1248" y1="181" x2="1270.3" y2="181" stroke="#404040" stroke-width="1.3"/>
<line x1="1248" y1="190" x2="1270.3" y2="190" stroke="#404040" stroke-width="1.3"/>
<rect x="1252.00" y="181.00" width="14.00" height="9.00" fill="#8cbde9" stroke="#2a8ad4" stroke-width="1.5" />
<path d="M1252,173 H1266 M1252,171.5 V175 M1266,171.5 V175" fill="none" stroke="#2a8ad4" stroke-width="1.4" />
<path d="M1338.30,182.80 L1342.50,187.00 L1346.70,182.80" fill="none" stroke="#444" stroke-width="1.5"/>
<path d="M1407,108.5 V106.2 H1389.5 L1399,116 L1389.5,125.5 H1407 V123" fill="none" stroke="#404040" stroke-width="1.6" />
<path d="M1420.30,115.60 L1424.30,119.60 L1428.30,115.60" fill="none" stroke="#444" stroke-width="1.5"/>
<rect x="1386.90" y="140.30" width="22.40" height="19.10" fill="#fff" stroke="#404040" stroke-width="1.5" />
<line x1="1387" y1="143.5" x2="1409.3" y2="143.5" stroke="#404040" stroke-width="1.3"/>
<path d="M1398,146.5 V156.5 M1394,152.5 L1398,156.5 L1402,152.5" fill="none" stroke="#2a8ad4" stroke-width="1.6" />
<path d="M1416.00,149.50 L1420.20,153.70 L1424.40,149.50" fill="none" stroke="#444" stroke-width="1.5"/>
<path d="M1387,185.5 L1398.5,174 L1408.5,184 L1397,195.5 Z" fill="#fff" stroke="#b146c2" stroke-width="1.6" />
<path d="M1387,185.5 L1392,180.5 L1402,190.5 L1397,195.5 Z" fill="#d59ddf" stroke="#b146c2" stroke-width="1.6" />
<path d="M1416.00,182.90 L1420.20,187.10 L1424.40,182.90" fill="none" stroke="#444" stroke-width="1.5"/>
<path d="M1448.6,126.3 L1455.3,108.6 L1462,126.3 M1450.9,120.3 H1459.7" fill="none" stroke="#2a8ad4" stroke-width="1.5" />
<path d="M1448.8,130.5 H1461.2 L1448.6,147 H1461.8" fill="none" stroke="#404040" stroke-width="1.5" />
<path d="M1466.6,118 H1489.4 V121 L1481,130.5 V140.2 H1475 V130.5 L1466.6,121 Z" fill="#fff" stroke="#404040" stroke-width="1.5" />
<path d="M1485.60,188.70 L1489.40,192.50 L1493.20,188.70" fill="none" stroke="#444" stroke-width="1.5"/>
<circle cx="1540.4" cy="122.5" r="15" fill="#fafafa" stroke="#404040" stroke-width="1.6"/>
<path d="M1529.5,133.8 L1513.2,149.6" fill="none" stroke="#404040" stroke-width="1.6" />
<path d="M1555.40,188.63 L1559.35,192.57 L1563.30,188.63" fill="none" stroke="#444" stroke-width="1.5"/>
<path d="M1616,107.8 H1638 L1627.5,124.8 H1640.5 L1612.5,148 L1621.5,131.8 H1609.5 Z" fill="#7ab7ee" stroke="#1e6fc0" stroke-width="1.6" stroke-linejoin="round"/>
<rect x="1707.30" y="107.80" width="29.80" height="40.20" fill="#ececec" stroke="#b3b3b3" stroke-width="1.6" />
<g transform="translate(1740.5,111.5) rotate(45)"><rect x="-4.50" y="-4.00" width="9.00" height="8.00" fill="#f3f2f1" stroke="#b3b3b3" stroke-width="1.6" /></g>
<g transform="translate(1731.5,120.5) rotate(45)"><rect x="-9.00" y="-5.00" width="18.00" height="10.00" fill="#f3f2f1" stroke="#b3b3b3" stroke-width="1.6" /><rect x="-9.00" y="-5.00" width="2.50" height="10.00" fill="#b3b3b3" stroke="none" stroke-width="1" /></g>
<g transform="translate(1721.5,131) rotate(45)"><rect x="-11.00" y="-5.50" width="22.00" height="11.00" fill="#f3f2f1" stroke="#b3b3b3" stroke-width="1.6" /><rect x="-8.00" y="-2.00" width="16.00" height="4.00" fill="none" stroke="#b3b3b3" stroke-width="1.4" /></g>
<path d="M1718.30,188.35 L1722.50,192.55 L1726.70,188.35" fill="none" stroke="#b3b3b3" stroke-width="1.5"/>
<path d="M1893.5,233 L1900.2,226.2 L1906.9,233" fill="none" stroke="#333" stroke-width="1.5" />
<rect x="7.50" y="255.50" width="151.00" height="34.00" fill="#fff" stroke="#c6c6c6" stroke-width="1" />
<path d="M140.5,269.5 H148.5 L144.5,273.8 Z" fill="#666" stroke="none" stroke-width="1" />
<rect x="179.20" y="263.80" width="3.00" height="3.00" fill="#a6a6a6" stroke="none" stroke-width="1" />
<rect x="179.20" y="269.90" width="3.00" height="3.00" fill="#a6a6a6" stroke="none" stroke-width="1" />
<rect x="179.20" y="276.00" width="3.00" height="3.00" fill="#a6a6a6" stroke="none" stroke-width="1" />
<rect x="204.50" y="255.50" width="163.00" height="34.00" fill="#fff" stroke="#c6c6c6" stroke-width="1" />
<path d="M224,265.5 L239.5,279.5 M239,265.5 L223.5,279.5" fill="none" stroke="#bdbdbd" stroke-width="2.2" />
<path d="M277.5,272.5 L284,280 L295,265.5" fill="none" stroke="#c9c9c9" stroke-width="3" />
<text x="330" y="279.5" font-family="Liberation Serif" font-style="italic" font-weight="bold" font-size="21" fill="#707070">f</text>
<text x="338" y="279.5" font-family="Liberation Serif" font-style="italic" font-weight="bold" font-size="17" fill="#707070">x</text>
<rect x="372.50" y="255.50" width="1540.00" height="34.00" fill="#fff" stroke="#c6c6c6" stroke-width="1" />
<path d="M1894,270.2 H1896.2 L1899.5,273.6 L1902.8,270.2 H1905 V272.4 L1899.5,277.8 L1894,272.4 Z" fill="#707070" stroke="none" stroke-width="1" />
<rect x="40.00" y="305.00" width="96.00" height="28.00" fill="#d2d2d2" stroke="none" stroke-width="1" />
<rect x="0.00" y="334.00" width="39.00" height="28.00" fill="#d2d2d2" stroke="none" stroke-width="1" />
<line x1="231.5" y1="304.5" x2="231.5" y2="333" stroke="#a9a9a9" stroke-width="1"/>
<line x1="327.5" y1="304.5" x2="327.5" y2="333" stroke="#a9a9a9" stroke-width="1"/>
<line x1="423.5" y1="304.5" x2="423.5" y2="333" stroke="#a9a9a9" stroke-width="1"/>
<line x1="519.5" y1="304.5" x2="519.5" y2="333" stroke="#a9a9a9" stroke-width="1"/>
<line x1="615.5" y1="304.5" x2="615.5" y2="333" stroke="#a9a9a9" stroke-width="1"/>
<line x1="711.5" y1="304.5" x2="711.5" y2="333" stroke="#a9a9a9" stroke-width="1"/>
<line x1="807.5" y1="304.5" x2="807.5" y2="333" stroke="#a9a9a9" stroke-width="1"/>
<line x1="903.5" y1="304.5" x2="903.5" y2="333" stroke="#a9a9a9" stroke-width="1"/>
<line x1="999.5" y1="304.5" x2="999.5" y2="333" stroke="#a9a9a9" stroke-width="1"/>
<line x1="1095.5" y1="304.5" x2="1095.5" y2="333" stroke="#a9a9a9" stroke-width="1"/>
<line x1="1191.5" y1="304.5" x2="1191.5" y2="333" stroke="#a9a9a9" stroke-width="1"/>
<line x1="1287.5" y1="304.5" x2="1287.5" y2="333" stroke="#a9a9a9" stroke-width="1"/>
<line x1="1383.5" y1="304.5" x2="1383.5" y2="333" stroke="#a9a9a9" stroke-width="1"/>
<line x1="1479.5" y1="304.5" x2="1479.5" y2="333" stroke="#a9a9a9" stroke-width="1"/>
<line x1="1575.5" y1="304.5" x2="1575.5" y2="333" stroke="#a9a9a9" stroke-width="1"/>
<line x1="1671.5" y1="304.5" x2="1671.5" y2="333" stroke="#a9a9a9" stroke-width="1"/>
<line x1="1767.5" y1="304.5" x2="1767.5" y2="333" stroke="#a9a9a9" stroke-width="1"/>
<line x1="1863.5" y1="304.5" x2="1863.5" y2="333" stroke="#a9a9a9" stroke-width="1"/>
<line x1="39.5" y1="304.5" x2="39.5" y2="333" stroke="#a9a9a9" stroke-width="1"/>
<line x1="0" y1="333.5" x2="1890" y2="333.5" stroke="#9b9b9b" stroke-width="1"/>
<line x1="0" y1="362.5" x2="39" y2="362.5" stroke="#a9a9a9" stroke-width="1"/>
<line x1="0" y1="391.5" x2="39" y2="391.5" stroke="#a9a9a9" stroke-width="1"/>
<line x1="0" y1="420.5" x2="39" y2="420.5" stroke="#a9a9a9" stroke-width="1"/>
<line x1="0" y1="449.5" x2="39" y2="449.5" stroke="#a9a9a9" stroke-width="1"/>
<line x1="0" y1="478.5" x2="39" y2="478.5" stroke="#a9a9a9" stroke-width="1"/>
<line x1="0" y1="507.5" x2="39" y2="507.5" stroke="#a9a9a9" stroke-width="1"/>
<line x1="0" y1="536.5" x2="39" y2="536.5" stroke="#a9a9a9" stroke-width="1"/>
<line x1="0" y1="565.5" x2="39" y2="565.5" stroke="#a9a9a9" stroke-width="1"/>
<line x1="0" y1="594.5" x2="39" y2="594.5" stroke="#a9a9a9" stroke-width="1"/>
<line x1="0" y1="623.5" x2="39" y2="623.5" stroke="#a9a9a9" stroke-width="1"/>
<line x1="0" y1="652.5" x2="39" y2="652.5" stroke="#a9a9a9" stroke-width="1"/>
<line x1="0" y1="681.5" x2="39" y2="681.5" stroke="#a9a9a9" stroke-width="1"/>
<line x1="0" y1="710.5" x2="39" y2="710.5" stroke="#a9a9a9" stroke-width="1"/>
<line x1="0" y1="739.5" x2="39" y2="739.5" stroke="#a9a9a9" stroke-width="1"/>
<line x1="0" y1="768.5" x2="39" y2="768.5" stroke="#a9a9a9" stroke-width="1"/>
<line x1="0" y1="797.5" x2="39" y2="797.5" stroke="#a9a9a9" stroke-width="1"/>
<line x1="0" y1="826.5" x2="39" y2="826.5" stroke="#a9a9a9" stroke-width="1"/>
<line x1="0" y1="855.5" x2="39" y2="855.5" stroke="#a9a9a9" stroke-width="1"/>
<line x1="0" y1="884.5" x2="39" y2="884.5" stroke="#a9a9a9" stroke-width="1"/>
<line x1="0" y1="913.5" x2="39" y2="913.5" stroke="#a9a9a9" stroke-width="1"/>
<line x1="0" y1="942.5" x2="39" y2="942.5" stroke="#a9a9a9" stroke-width="1"/>
<line x1="39.5" y1="333" x2="39.5" y2="953" stroke="#9b9b9b" stroke-width="1"/>
<path d="M16,329.5 L35.5,310 V329.5 Z" fill="#b7b7b7" stroke="none" stroke-width="1" />
<line x1="1889.5" y1="333" x2="1889.5" y2="953" stroke="#9b9b9b" stroke-width="1"/>
<text x="19.6" y="965.3" text-anchor="middle" font-family="Liberation Sans" font-size="18.2" fill="#1a1a1a">22</text>
<rect x="39.00" y="333.00" width="97.00" height="30.00" fill="none" stroke="#217346" stroke-width="2" />
<rect x="131.00" y="358.00" width="8.00" height="8.00" fill="#fff" stroke="none" stroke-width="1" />
<rect x="132.20" y="359.20" width="5.60" height="5.60" fill="#217346" stroke="none" stroke-width="1" />
<rect x="1890.00" y="305.00" width="30.00" height="648.00" fill="#e6e6e6" stroke="none" stroke-width="1" />
<rect x="1892.50" y="306.50" width="24.00" height="24.00" fill="#fff" stroke="#ababab" stroke-width="1" />
<path d="M1899,321.5 L1904.5,315.8 L1910,321.5 Z" fill="#666" stroke="none" stroke-width="1" />
<rect x="1892.50" y="331.50" width="24.00" height="569.00" fill="#fff" stroke="#ababab" stroke-width="1" />
<rect x="1893.00" y="901.00" width="23.00" height="29.00" fill="#dadada" stroke="none" stroke-width="1" />
<rect x="0.00" y="953.00" width="1920.00" height="35.00" fill="#e6e6e6" stroke="none" stroke-width="1" />
<line x1="0" y1="953.5" x2="1890" y2="953.5" stroke="#9b9b9b" stroke-width="1"/>
<path d="M35,963.5 L29.5,969.5 L35,975.5 Z" fill="#bfbfbf" stroke="none" stroke-width="1" />
<path d="M64.5,963.5 L70,969.5 L64.5,975.5 Z" fill="#bfbfbf" stroke="none" stroke-width="1" />
<rect x="118.50" y="953.00" width="88.00" height="30.50" fill="#fff" stroke="none" stroke-width="1" />
<line x1="118.5" y1="953" x2="118.5" y2="983" stroke="#9b9b9b" stroke-width="1"/>
<line x1="206.5" y1="953" x2="206.5" y2="983" stroke="#9b9b9b" stroke-width="1"/>
<rect x="118.00" y="982.00" width="89.00" height="2.00" fill="#217346" stroke="none" stroke-width="1" />
<circle cx="256.7" cy="969.8" r="10.6" fill="none" stroke="#808080" stroke-width="1.3"/>
<path d="M251,969.8 H262.4 M256.7,964.1 V975.5" fill="none" stroke="#666" stroke-width="1.5" />
<rect x="1147.90" y="961.90" width="3.00" height="3.00" fill="#a6a6a6" stroke="none" stroke-width="1" />
<rect x="1147.90" y="967.90" width="3.00" height="3.00" fill="#a6a6a6" stroke="none" stroke-width="1" />
<rect x="1147.90" y="973.90" width="3.00" height="3.00" fill="#a6a6a6" stroke="none" stroke-width="1" />
<rect x="1168.50" y="957.50" width="24.00" height="24.00" fill="#fff" stroke="#ababab" stroke-width="1" />
<path d="M1183,964.5 L1177,969.5 L1183,974.5 Z" fill="#666" stroke="none" stroke-width="1" />
<rect x="1192.50" y="957.50" width="637.00" height="24.00" fill="#fff" stroke="#ababab" stroke-width="1" />
<rect x="1830.00" y="958.00" width="36.00" height="23.00" fill="#dadada" stroke="none" stroke-width="1" />
<rect x="1866.50" y="957.50" width="24.00" height="24.00" fill="#fff" stroke="#ababab" stroke-width="1" />
<path d="M1876,964.5 L1882,969.5 L1876,974.5 Z" fill="#666" stroke="none" stroke-width="1" />
<rect x="1892.50" y="930.50" width="24.00" height="24.00" fill="#fff" stroke="#ababab" stroke-width="1" />
<path d="M1899,939.8 L1904.5,945.5 L1910,939.8 Z" fill="#666" stroke="none" stroke-width="1" />
<rect x="0.00" y="988.00" width="1920.00" height="32.00" fill="#f3f2f1" stroke="none" stroke-width="1" />
<line x1="0" y1="987.5" x2="1920" y2="987.5" stroke="#c8c8c8" stroke-width="1"/>
<rect x="1475.60" y="988.00" width="59.10" height="32.00" fill="#c8c6c4" stroke="none" stroke-width="1" />
<line x1="1495.25" y1="994" x2="1495.25" y2="1012.5" stroke="#333" stroke-width="1.5"/>
<line x1="1494.5" y1="994.75" x2="1514" y2="994.75" stroke="#333" stroke-width="1.5"/>
<line x1="1501.35" y1="994" x2="1501.35" y2="1012.5" stroke="#333" stroke-width="1.5"/>
<line x1="1494.5" y1="1000.65" x2="1514" y2="1000.65" stroke="#333" stroke-width="1.5"/>
<line x1="1507.45" y1="994" x2="1507.45" y2="1012.5" stroke="#333" stroke-width="1.5"/>
<line x1="1494.5" y1="1006.55" x2="1514" y2="1006.55" stroke="#333" stroke-width="1.5"/>
<line x1="1513.55" y1="994" x2="1513.55" y2="1012.5" stroke="#333" stroke-width="1.5"/>
<line x1="1494.5" y1="1012.45" x2="1514" y2="1012.45" stroke="#333" stroke-width="1.5"/>
<line x1="1760" y1="1003.5" x2="1831" y2="1003.5" stroke="#a0a0a0" stroke-width="1"/>
<rect x="1755.40" y="995.00" width="5.30" height="16.40" fill="#595959" stroke="none" stroke-width="1" />
<path d="M1839,1003.7 H1850.5 M1844.75,998 V1009.4" fill="none" stroke="#444" stroke-width="1.4" />
<defs><filter id="tsh" x="-10%" y="-30%" width="120%" height="180%"><feDropShadow dx="2" dy="2" stdDeviation="1.5" flood-color="#000" flood-opacity="0.35"/></filter></defs>
<rect x="1548.50" y="990.50" width="207.00" height="29.00" fill="#fff" stroke="#8a8a8a" stroke-width="1" filter="url(#tsh)"/>
<rect x="1557.00" y="993.50" width="23.00" height="22.50" fill="none" stroke="#d9cfcf" stroke-width="1.3" />
<rect x="1616.00" y="993.50" width="24.00" height="22.50" fill="none" stroke="#d9cfcf" stroke-width="1.3" />
<defs><linearGradient id="tbg" x1="0" x2="1" y1="0" y2="0"><stop offset="0" stop-color="#ddd7d5"/><stop offset="0.3" stop-color="#dbd9d8"/><stop offset="0.5" stop-color="#e0d7d4"/><stop offset="0.62" stop-color="#dcd9d8"/><stop offset="0.8" stop-color="#dddbda"/><stop offset="1" stop-color="#dad9d8"/></linearGradient></defs>
<rect x="0.00" y="1020.00" width="1920.00" height="60.00" fill="url(#tbg)" stroke="none" stroke-width="1" />
<rect x="0.00" y="1020.00" width="72.00" height="60.00" fill="#dfd8d5" stroke="none" stroke-width="1" />
<rect x="73.20" y="1021.00" width="512.40" height="58.00" fill="#fff" stroke="#c8c8c8" stroke-width="2" />
<path d="M23.75,1040.3 L34.5,1038.8 V1049.3 H23.75 Z M35.9,1038.6 L48.1,1036.9 V1049.3 H35.9 Z M23.75,1050.7 H34.5 V1061.2 L23.75,1059.7 Z M35.9,1050.7 H48.1 V1062 L35.9,1060.4 Z" fill="#000" stroke="none" stroke-width="1" />
<circle cx="104.5" cy="1045.6" r="7" fill="none" stroke="#1b1b1b" stroke-width="1.6"/>
<path d="M99.5,1050.6 L90.3,1060.8" fill="none" stroke="#1b1b1b" stroke-width="1.7" />
<g transform="translate(629,1049.7) rotate(45)"><rect x="-12.50" y="-12.50" width="12.50" height="12.50" fill="#f07b7b" stroke="none" stroke-width="1" /><rect x="0.00" y="-12.50" width="12.50" height="12.50" fill="#7cc66a" stroke="none" stroke-width="1" /><rect x="-12.50" y="0.00" width="12.50" height="12.50" fill="#7fb2f0" stroke="none" stroke-width="1" /><rect x="0.00" y="0.00" width="12.50" height="12.50" fill="#f5dc6a" stroke="none" stroke-width="1" /></g>
<path d="M624,1038 L632,1052 M634,1038 L626,1052" fill="none" stroke="#fff" stroke-width="1.3" />
<circle cx="624" cy="1055" r="2.6" fill="none" stroke="#fff" stroke-width="1.2"/><circle cx="635" cy="1054" r="2.6" fill="none" stroke="#fff" stroke-width="1.2"/>
<rect x="687" y="1032.8" width="34.3" height="34.1" rx="11" fill="#4a8cf7"/>
<rect x="693.5" y="1044" width="15" height="12" rx="2.5" fill="#fff"/>
<path d="M709.5,1048 L714.5,1044.5 V1055.5 L709.5,1052 Z" fill="#fff" stroke="none" stroke-width="1" />
<rect x="762.70" y="1040.50" width="32.00" height="22.50" fill="#f9d96a" stroke="none" stroke-width="1" />
<path d="M762.7,1042 V1038.8 Q762.7,1037 764.5,1037 H772.5 L776,1040.2 H779 V1042 Z" fill="#dca62c" stroke="none" stroke-width="1" />
<path d="M769,1063 V1051 H789 V1063 H783.5 V1056 H774.5 V1063 Z" fill="#3c8fd6" stroke="none" stroke-width="1" />
<circle cx="853.7" cy="1049.7" r="16.4" fill="#f4c430"/>
<path d="M853.7,1049.7 L839.5,1041.5 A16.4,16.4 0 0 1 867.9,1041.5 Z" fill="#db4437" stroke="none" stroke-width="1" />
<path d="M853.7,1049.7 L839.5,1041.5 A16.4,16.4 0 0 0 853.7,1066.1 Z" fill="#0f9d58" stroke="none" stroke-width="1" />
<path d="M853.7,1033.3 A16.4,16.4 0 0 0 839.5,1041.5 L847,1054 L853.7,1049.7 Z" fill="#db4437" stroke="none" stroke-width="1" />
<path d="M853.7,1066.1 A16.4,16.4 0 0 0 868,1041.6 L853.7,1041.6 L860,1055 Z" fill="#f4c430" stroke="none" stroke-width="1" />
<path d="M847,1054 L839.5,1041.5 A16.4,16.4 0 0 0 853.7,1066.1 L860.5,1054 Z" fill="#0f9d58" stroke="none" stroke-width="1" />
<circle cx="853.7" cy="1049.7" r="7.2" fill="#fff"/><circle cx="853.7" cy="1049.7" r="5.6" fill="#4285f4"/>
<rect x="921.00" y="1034.00" width="24.00" height="24.00" fill="#0a64c4" stroke="none" stroke-width="1" />
<rect x="933.00" y="1040.00" width="12.00" height="12.00" fill="#28a8ea" stroke="none" stroke-width="1" />
<rect x="939.00" y="1034.00" width="6.00" height="12.00" fill="#50d9ff" stroke="none" stroke-width="1" />
<rect x="911.00" y="1041.50" width="18.00" height="18.00" fill="#0f6cbd" stroke="none" stroke-width="1" />
<text x="920" y="1056" text-anchor="middle" font-family="Liberation Sans" font-weight="bold" font-size="14" fill="#fff">O</text>
<rect x="928.00" y="1055.00" width="22.00" height="15.80" fill="#e8b56e" stroke="none" stroke-width="1" />
<path d="M928.5,1055.5 L939,1064 L949.5,1055.5" fill="none" stroke="#fbe3b9" stroke-width="1.5" />
<rect x="994.00" y="1034.00" width="27.00" height="32.00" fill="#ca64ea" stroke="none" stroke-width="1" />
<rect x="1013.00" y="1042.00" width="8.00" height="8.00" fill="#ae4bd5" stroke="none" stroke-width="1" />
<rect x="1013.00" y="1050.00" width="8.00" height="8.00" fill="#9332bf" stroke="none" stroke-width="1" />
<rect x="1013.00" y="1058.00" width="8.00" height="8.00" fill="#7719aa" stroke="none" stroke-width="1" />
<rect x="986.00" y="1041.00" width="18.00" height="18.00" fill="#7719aa" stroke="none" stroke-width="1" />
<text x="995" y="1055.5" text-anchor="middle" font-family="Liberation Sans" font-weight="bold" font-size="14" fill="#fff">N</text>
<circle cx="1079" cy="1049.7" r="18" fill="#75aadb"/>
<text x="1079" y="1059" text-anchor="middle" font-family="Liberation Serif" font-size="25" fill="#fff">R</text>
<rect x="1144.00" y="1034.00" width="27.00" height="32.00" fill="#21a366" stroke="none" stroke-width="1" />
<rect x="1157.50" y="1034.00" width="13.50" height="11.00" fill="#33c481" stroke="none" stroke-width="1" />
<rect x="1144.00" y="1045.00" width="27.00" height="10.50" fill="#107c41" stroke="none" stroke-width="1" />
<rect x="1144.00" y="1055.50" width="27.00" height="10.50" fill="#185c37" stroke="none" stroke-width="1" />
<rect x="1136.00" y="1041.00" width="18.00" height="18.00" fill="#107c41" stroke="none" stroke-width="1" />
<text x="1145" y="1055.5" text-anchor="middle" font-family="Liberation Sans" font-weight="bold" font-size="14" fill="#fff">X</text>
<rect x="749.00" y="1077.00" width="61.00" height="3.00" fill="#c55f2a" stroke="none" stroke-width="1" />
<rect x="824.00" y="1077.00" width="60.50" height="3.00" fill="#c55f2a" stroke="none" stroke-width="1" />
<rect x="899.00" y="1077.00" width="60.80" height="3.00" fill="#c55f2a" stroke="none" stroke-width="1" />
<rect x="1049.00" y="1077.00" width="49.00" height="3.00" fill="#c55f2a" stroke="none" stroke-width="1" />
<rect x="1124.00" y="1077.00" width="60.50" height="3.00" fill="#c55f2a" stroke="none" stroke-width="1" />
<rect x="1098.00" y="1077.00" width="12.00" height="3.00" fill="#dca88c" stroke="none" stroke-width="1" />
<path d="M1493.8,1053.5 L1502.2,1045 L1510.6,1053.5" fill="none" stroke="#1b1b1b" stroke-width="1.5" />
<path d="M1542.0,1059.0 A17.0,17.0 0 0 1 1559.0,1042.0" fill="none" stroke="#222" stroke-width="1.4" />
<path d="M1546.5,1059.0 A12.5,12.5 0 0 1 1559.0,1046.5" fill="none" stroke="#222" stroke-width="1.4" />
<path d="M1551.0,1059.0 A8.0,8.0 0 0 1 1559.0,1051.0" fill="none" stroke="#222" stroke-width="1.4" />
<circle cx="1558.2" cy="1058.2" r="1.6" fill="#222"/>
<path d="M1587.5,1046.5 H1592 L1598.5,1041.5 V1058.5 L1592,1053.5 H1587.5 Z" fill="none" stroke="#222" stroke-width="1.4" />
<path d="M1602,1047 Q1604.5,1050 1602,1053 M1605.5,1044.5 Q1609.5,1050 1605.5,1055.5" fill="none" stroke="#8a8a8a" stroke-width="1.3" />
<rect x="1622.00" y="1020.00" width="60.00" height="60.00" fill="#e6e3e2" stroke="none" stroke-width="1" />
<path d="M1651,1053 L1657.5,1042 Q1659,1040 1660.5,1041.5 Q1661.5,1043 1660,1045 L1653.5,1056 Z M1650.5,1058 Q1644,1059 1644,1055 Q1644.5,1051 1650,1051 M1658,1048.5 Q1664,1049 1661,1052.5" fill="none" stroke="#1b1b1b" stroke-width="1.4" />
<path d="M1858.5,1038 H1882.5 V1056.5 H1868 L1862.5,1061.5 V1056.5 H1858.5 Z" fill="#000" stroke="none" stroke-width="1" />
<path d="M1862.5,1043.5 H1878 M1862.5,1047.5 H1878 M1862.5,1051.5 H1874" fill="none" stroke="#fff" stroke-width="1" />
<circle cx="1877" cy="1056.5" r="5.6" fill="#dcdbda" stroke="#000" stroke-width="1.2"/>
<path d="M1879.5,1051.8 A4.2,4.2 0 1 1 1872.6,1058.6 A5,5 0 0 0 1879.5,1051.8 Z" fill="#fff" stroke="#000" stroke-width="1.1" />
<line x1="1913.5" y1="1020" x2="1913.5" y2="1080" stroke="#a9a9a9" stroke-width="1"/>
<rect x="1552" y="1020" width="206" height="2.5" fill="url(#tsg)"/><defs><linearGradient id="tsg" x1="0" x2="0" y1="0" y2="1"><stop offset="0" stop-color="#000" stop-opacity="0.3"/><stop offset="1" stop-color="#000" stop-opacity="0"/></linearGradient></defs>
</svg>
<span class="t" style="left:31.50px;top:14.00px;font-size:19.04px;color:#ffffff;transform:scaleX(0.9153)">AutoSave</span>
<span class="t" style="left:145.50px;top:16.00px;font-size:13.37px;color:#ffffff;transform:scaleX(1.0246)">Off</span>
<span class="t" style="left:516.89px;top:13.00px;font-size:19.04px;color:#ffffff;transform:scaleX(0.9107)">Book1</span>
<span class="t" style="left:595.19px;top:13.00px;font-size:19.04px;color:#ffffff;transform:scaleX(0.8125)">Excel</span>
<span class="t" style="left:789.70px;top:14.00px;font-size:19.55px;color:#1e5b3a;transform:scaleX(0.8341)">Search</span>
<span class="t" style="left:1479.04px;top:14.00px;font-size:19.77px;color:#ffffff;transform:scaleX(0.8612)">Brian Krauth</span>
<span class="t" style="left:25.09px;top:62.00px;font-size:20.78px;color:#3b3a39;transform:scaleX(0.9088)">File</span>
<span class="t" style="left:100.47px;top:62.00px;font-size:20.49px;color:#323130;transform:scaleX(1.0282);-webkit-text-stroke:0.45px #323130">Home</span>
<span class="t" style="left:198.18px;top:62.00px;font-size:20.49px;color:#3b3a39;transform:scaleX(0.9161)">Insert</span>
<span class="t" style="left:287.04px;top:62.00px;font-size:20.49px;color:#3b3a39;transform:scaleX(0.9573)">Draw</span>
<span class="t" style="left:374.08px;top:62.00px;font-size:20.49px;color:#3b3a39;transform:scaleX(0.9183)">Page Layout</span>
<span class="t" style="left:523.25px;top:62.00px;font-size:20.49px;color:#3b3a39;transform:scaleX(0.9450)">Formulas</span>
<span class="t" style="left:644.06px;top:62.00px;font-size:20.49px;color:#3b3a39;transform:scaleX(0.9446)">Data</span>
<span class="t" style="left:725.71px;top:62.00px;font-size:20.49px;color:#3b3a39;transform:scaleX(0.8950)">Review</span>
<span class="t" style="left:828.00px;top:62.00px;font-size:20.49px;color:#3b3a39;transform:scaleX(0.9212)">View</span>
<span class="t" style="left:910.02px;top:62.00px;font-size:20.49px;color:#3b3a39;transform:scaleX(0.9819)">Help</span>
<span class="t" style="left:992.00px;top:62.00px;font-size:20.49px;color:#3b3a39;transform:scaleX(0.9816)">Acrobat</span>
<span class="t" style="left:1675.13px;top:62.00px;font-size:21.95px;color:#1e6b41;transform:scaleX(0.8720);-webkit-text-stroke:0.50px #1e6b41">Share</span>
<span class="t" style="left:1788.07px;top:62.00px;font-size:21.95px;color:#1e6b41;transform:scaleX(0.9326);-webkit-text-stroke:0.50px #1e6b41">Comments</span>
<span class="t" style="left:22.37px;top:159.00px;font-size:17.30px;color:#444444;transform:scaleX(0.9277)">Paste</span>
<span class="t" style="left:24.70px;top:219.00px;font-size:15.99px;color:#444444;transform:scaleX(0.9922)">Clipboard</span>
<span class="t" style="left:157.80px;top:123.00px;font-size:17.88px;color:#262626;transform:scaleX(0.9628)">Calibri</span>
<span class="t" style="left:331.90px;top:123.00px;font-size:18.17px;color:#262626;transform:scaleX(0.8958)">11</span>
<span class="t" style="left:275.28px;top:219.00px;font-size:15.99px;color:#444444;transform:scaleX(0.9748)">Font</span>
<span class="t" style="left:547.50px;top:219.00px;font-size:15.99px;color:#444444">Alignment</span>
<span class="t" style="left:739.60px;top:122.00px;font-size:18.82px;color:#262626;transform:scaleX(0.8806)">General</span>
<span class="t" style="left:789.50px;top:219.00px;font-size:15.99px;color:#444444">Number</span>
<span class="t" style="left:962.70px;top:158.00px;font-size:18.17px;color:#444444">Conditional</span>
<span class="t" style="left:954.97px;top:182.00px;font-size:17.73px;color:#444444;transform:scaleX(1.0335)">Formatting</span>
<span class="t" style="left:1066.84px;top:158.00px;font-size:18.17px;color:#444444;transform:scaleX(0.9573)">Format as</span>
<span class="t" style="left:1079.50px;top:182.00px;font-size:17.73px;color:#444444;transform:scaleX(0.9058)">Table</span>
<span class="t" style="left:1170.50px;top:158.00px;font-size:18.17px;color:#444444;transform:scaleX(0.8928)">Cell</span>
<span class="t" style="left:1153.75px;top:182.00px;font-size:17.73px;color:#444444;transform:scaleX(0.8938)">Styles</span>
<span class="t" style="left:1065.00px;top:219.00px;font-size:15.99px;color:#444444;transform:scaleX(0.8797)">Styles</span>
<span class="t" style="left:1274.81px;top:108.00px;font-size:17.73px;color:#444444;transform:scaleX(0.9933)">Insert</span>
<span class="t" style="left:1274.84px;top:142.00px;font-size:18.17px;color:#444444;transform:scaleX(0.9575)">Delete</span>
<span class="t" style="left:1274.80px;top:176.00px;font-size:18.17px;color:#444444">Format</span>
<span class="t" style="left:1283.90px;top:219.00px;font-size:15.99px;color:#444444;transform:scaleX(0.8752)">Cells</span>
<span class="t" style="left:1443.60px;top:158.00px;font-size:17.73px;color:#444444;transform:scaleX(1.0462)">Sort &amp;</span>
<span class="t" style="left:1441.26px;top:182.00px;font-size:18.17px;color:#444444;transform:scaleX(0.9440)">Filter</span>
<span class="t" style="left:1507.87px;top:158.00px;font-size:17.73px;color:#444444;transform:scaleX(1.0299)">Find &amp;</span>
<span class="t" style="left:1503.60px;top:182.00px;font-size:18.17px;color:#444444;transform:scaleX(0.8955)">Select</span>
<span class="t" style="left:1450.49px;top:219.00px;font-size:15.99px;color:#444444;transform:scaleX(1.0057)">Editing</span>
<span class="t" style="left:1603.74px;top:158.00px;font-size:17.73px;color:#444444;transform:scaleX(0.9556)">Ideas</span>
<span class="t" style="left:1605.79px;top:219.00px;font-size:15.99px;color:#444444;transform:scaleX(0.9105)">Ideas</span>
<span class="t" style="left:1683.90px;top:158.00px;font-size:17.73px;color:#a6a6a6;transform:scaleX(0.9662)">Sensitivity</span>
<span class="t" style="left:1686.40px;top:219.00px;font-size:15.99px;color:#444444;transform:scaleX(0.9741)">Sensitivity</span>
<span class="t" style="left:14.40px;top:263.00px;font-size:19.33px;color:#262626;transform:scaleX(0.9873)">A1</span>
<span class="t" style="left:164.17px;top:166.00px;font-size:20.20px;color:#333;font-weight:700;transform:scaleX(0.8308)">B</span>
<span class="t" style="left:745.80px;top:164.00px;font-size:26.16px;color:#333;transform:scaleX(0.7467)">$</span>
<span class="t" style="left:794.91px;top:162.00px;font-size:30.23px;color:#333;transform:scaleX(0.8880)">%</span>
<span class="t" style="left:81.40px;top:312.00px;font-size:18.17px;color:#217346">A</span>
<span class="t" style="left:177.40px;top:312.00px;font-size:18.17px;color:#1a1a1a">B</span>
<span class="t" style="left:273.40px;top:312.00px;font-size:18.17px;color:#1a1a1a">C</span>
<span class="t" style="left:368.90px;top:312.00px;font-size:18.17px;color:#1a1a1a">D</span>
<span class="t" style="left:465.40px;top:312.00px;font-size:18.17px;color:#1a1a1a">E</span>
<span class="t" style="left:561.90px;top:312.00px;font-size:18.17px;color:#1a1a1a">F</span>
<span class="t" style="left:657.40px;top:312.00px;font-size:18.17px;color:#1a1a1a">G</span>
<span class="t" style="left:753.40px;top:312.00px;font-size:18.17px;color:#1a1a1a">H</span>
<span class="t" style="left:853.40px;top:312.00px;font-size:18.17px;color:#1a1a1a">I</span>
<span class="t" style="left:947.90px;top:312.00px;font-size:18.17px;color:#1a1a1a">J</span>
<span class="t" style="left:1041.40px;top:312.00px;font-size:18.17px;color:#1a1a1a">K</span>
<span class="t" style="left:1138.40px;top:312.00px;font-size:18.17px;color:#1a1a1a">L</span>
<span class="t" style="left:1232.40px;top:312.00px;font-size:18.17px;color:#1a1a1a">M</span>
<span class="t" style="left:1329.40px;top:312.00px;font-size:18.17px;color:#1a1a1a">N</span>
<span class="t" style="left:1424.90px;top:312.00px;font-size:18.17px;color:#1a1a1a">O</span>
<span class="t" style="left:1521.40px;top:312.00px;font-size:18.17px;color:#1a1a1a">P</span>
<span class="t" style="left:1616.90px;top:312.00px;font-size:18.17px;color:#1a1a1a">Q</span>
<span class="t" style="left:1712.90px;top:312.00px;font-size:18.17px;color:#1a1a1a">R</span>
<span class="t" style="left:1809.90px;top:312.00px;font-size:18.17px;color:#1a1a1a">S</span>
<span class="t" style="left:14.10px;top:340.00px;font-size:18.17px;color:#217346">1</span>
<span class="t" style="left:14.60px;top:369.00px;font-size:18.17px;color:#1a1a1a">2</span>
<span class="t" style="left:14.60px;top:398.00px;font-size:18.17px;color:#1a1a1a">3</span>
<span class="t" style="left:14.60px;top:427.00px;font-size:18.17px;color:#1a1a1a">4</span>
<span class="t" style="left:14.60px;top:456.00px;font-size:18.17px;color:#1a1a1a">5</span>
<span class="t" style="left:14.60px;top:485.00px;font-size:18.17px;color:#1a1a1a">6</span>
<span class="t" style="left:14.60px;top:514.00px;font-size:18.17px;color:#1a1a1a">7</span>
<span class="t" style="left:14.60px;top:543.00px;font-size:18.17px;color:#1a1a1a">8</span>
<span class="t" style="left:14.60px;top:572.00px;font-size:18.17px;color:#1a1a1a">9</span>
<span class="t" style="left:9.05px;top:601.00px;font-size:18.17px;color:#1a1a1a">10</span>
<span class="t" style="left:9.73px;top:630.00px;font-size:18.17px;color:#1a1a1a">11</span>
<span class="t" style="left:9.05px;top:659.00px;font-size:18.17px;color:#1a1a1a">12</span>
<span class="t" style="left:9.05px;top:688.00px;font-size:18.17px;color:#1a1a1a">13</span>
<span class="t" style="left:9.05px;top:717.00px;font-size:18.17px;color:#1a1a1a">14</span>
<span class="t" style="left:9.05px;top:746.00px;font-size:18.17px;color:#1a1a1a">15</span>
<span class="t" style="left:9.05px;top:775.00px;font-size:18.17px;color:#1a1a1a">16</span>
<span class="t" style="left:9.05px;top:804.00px;font-size:18.17px;color:#1a1a1a">17</span>
<span class="t" style="left:9.05px;top:833.00px;font-size:18.17px;color:#1a1a1a">18</span>
<span class="t" style="left:9.05px;top:862.00px;font-size:18.17px;color:#1a1a1a">19</span>
<span class="t" style="left:9.55px;top:891.00px;font-size:18.17px;color:#1a1a1a">20</span>
<span class="t" style="left:9.55px;top:920.00px;font-size:18.17px;color:#1a1a1a">21</span>
<span class="t" style="left:130.50px;top:957.00px;font-size:20.35px;color:#217346;font-weight:700;transform:scaleX(0.9383)">Sheet1</span>
<span class="t" style="left:9.63px;top:996.00px;font-size:15.12px;color:#444;transform:scaleX(0.9670)">Ready</span>
<span class="t" style="left:1869.24px;top:996.00px;font-size:15.70px;color:#444;transform:scaleX(0.9649)">100%</span>
<span class="t" style="left:1554.60px;top:996.00px;font-size:18.02px;color:#575757;transform:scaleX(0.9859)">Windows Ink Workspace</span>
<span class="t" style="left:132.80px;top:1038.00px;font-size:23.84px;color:#1b1b1b;transform:scaleX(0.9367)">Type here to search</span>
<span class="t" style="left:1691.70px;top:1041.00px;font-size:17.73px;color:#111;transform:scaleX(0.8986)">ENG</span>
<span class="t" style="left:1755.40px;top:1027.00px;font-size:17.73px;color:#111;transform:scaleX(0.9781)">4:54 PM</span>
<span class="t" style="left:1741.59px;top:1054.00px;font-size:18.46px;color:#111;transform:scaleX(1.0085)">12/29/2020</span>

</body></html>
